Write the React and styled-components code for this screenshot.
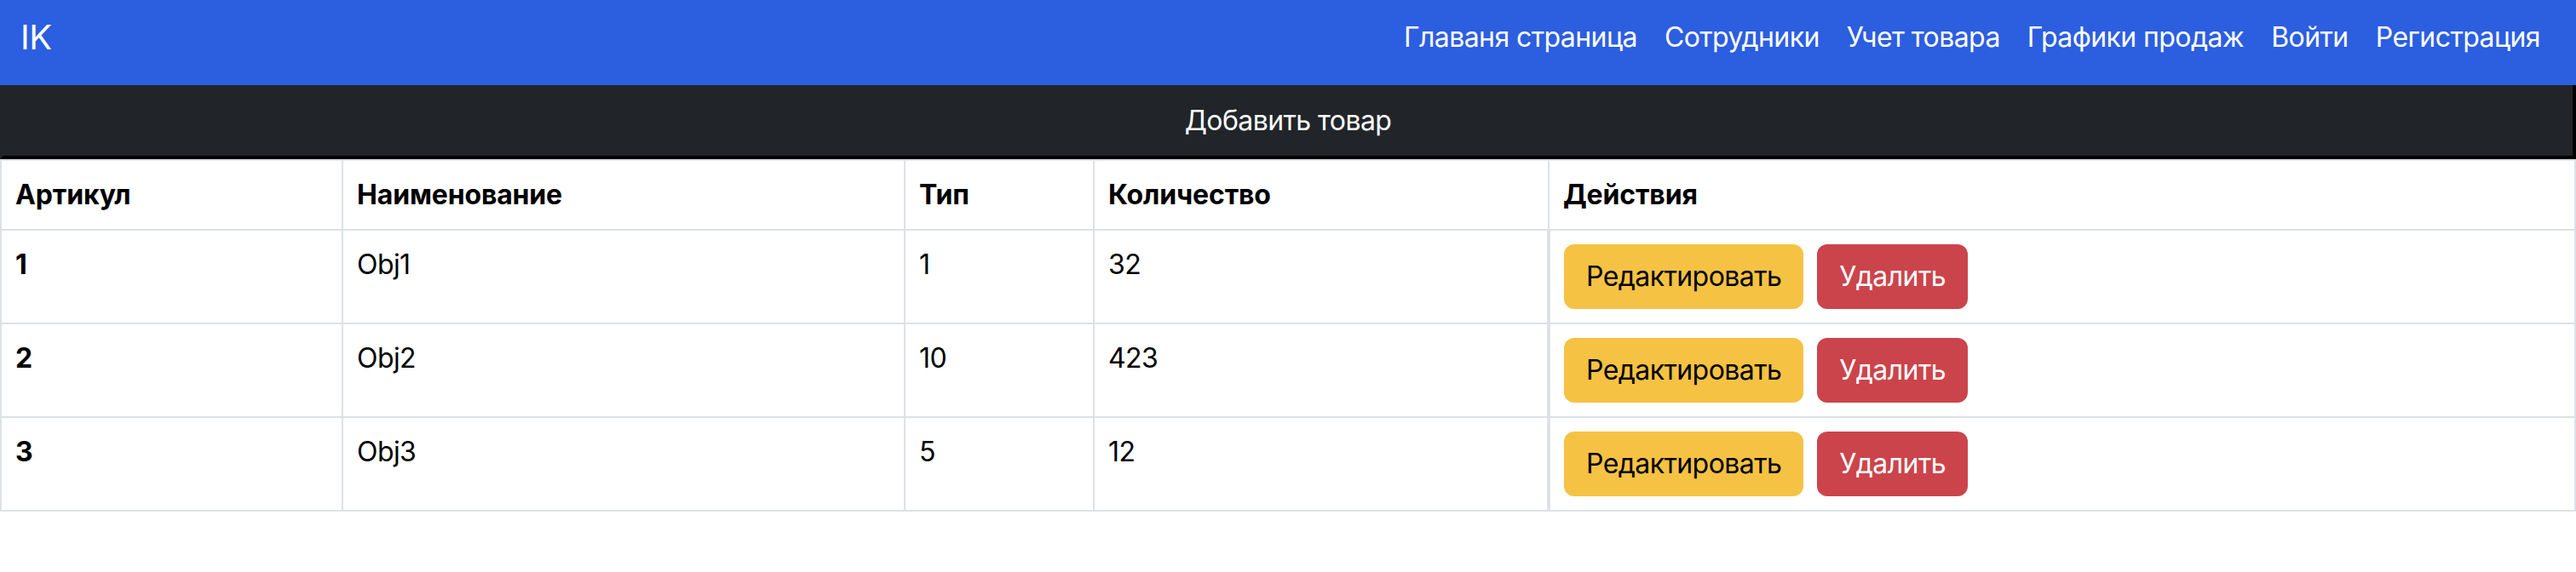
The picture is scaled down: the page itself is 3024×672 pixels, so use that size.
import React from 'react'
import styled, { createGlobalStyle } from 'styled-components'

const GlobalStyle = createGlobalStyle`
  * { box-sizing: border-box; }
  body {
    margin: 0;
    background: #fff;
    color: #000;
    font-family: Inter, "Noto Sans", sans-serif;
    letter-spacing: -0.036em;
  }
  button { letter-spacing: inherit; }
`

const Navbar = styled.nav`
  display: flex;
  align-items: center;
  justify-content: space-between;
  height: 100px;
  padding: 0 26px 12px 24px;
  background: #2c5ee0;
`

const Brand = styled.a`
  font-size: 40px;
  line-height: 60px;
  color: #fff;
  text-decoration: none;
`

const NavList = styled.ul`
  display: flex;
  margin: 0;
  padding: 0;
  list-style: none;
`

const NavLink = styled.a`
  display: block;
  padding: 0 16px;
  font-size: 32px;
  line-height: 48px;
  color: #fff;
  text-decoration: none;
`

const AddButton = styled.button`
  display: block;
  width: 100%;
  height: 87px;
  padding: 0;
  background: #212529;
  color: #fff;
  font-family: inherit;
  font-size: 32px;
  line-height: 48px;
  border-style: solid;
  border-width: 0 4px 4px 4px;
  border-color: #212529 #000 #000 #212529;
`

const Table = styled.table`
  width: 100%;
  table-layout: fixed;
  border-collapse: collapse;
  font-size: 32px;
  line-height: 48px;
  border: 2px solid #dee2e6;
`

const Col = styled.col`
  width: ${p => p.$w || 'auto'};
`

const Cell = styled.td`
  padding: 16px;
  text-align: left;
  vertical-align: top;
  font-weight: ${p => (p.$bold ? 700 : 400)};
  letter-spacing: ${p => (p.$bold ? '-0.005em' : 'inherit')};
  border: 2px solid #dee2e6;
  border-left-width: ${p => (p.$thick ? '4px' : '2px')};
`

const Actions = styled.div`
  display: flex;
  gap: 16px;
`

const Button = styled.button`
  padding: 12px 24px;
  font-family: inherit;
  font-size: 32px;
  line-height: 48px;
  border: 2px solid transparent;
  border-radius: 12px;
  background: ${p => (p.$danger ? '#cb444b' : '#f5c243')};
  color: ${p => (p.$danger ? '#fff' : '#000')};
`

const links = ['Главаня страница', 'Сотрудники', 'Учет товара', 'Графики продаж', 'Войти', 'Регистрация']

const items = [
  { id: 1, name: 'Obj1', type: 1, count: 32 },
  { id: 2, name: 'Obj2', type: 10, count: 423 },
  { id: 3, name: 'Obj3', type: 5, count: 12 },
]

export default function App() {
  return (
    <>
      <GlobalStyle />
      <Navbar>
        <Brand href="#">IK</Brand>
        <NavList>
          {links.map(l => (
            <li key={l}><NavLink href="#">{l}</NavLink></li>
          ))}
        </NavList>
      </Navbar>

      <AddButton>Добавить товар</AddButton>

      <Table>
        <colgroup>
          <Col $w="401px" />
          <Col $w="660px" />
          <Col $w="222px" />
          <Col $w="534px" />
          <Col />
        </colgroup>
        <thead>
          <tr>
            <Cell as="th" $bold>Артикул</Cell>
            <Cell as="th" $bold>Наименование</Cell>
            <Cell as="th" $bold>Тип</Cell>
            <Cell as="th" $bold>Количество</Cell>
            <Cell as="th" $bold>Действия</Cell>
          </tr>
        </thead>
        <tbody>
          {items.map(item => (
            <tr key={item.id}>
              <Cell as="th" $bold>{item.id}</Cell>
              <Cell>{item.name}</Cell>
              <Cell>{item.type}</Cell>
              <Cell>{item.count}</Cell>
              <Cell $thick>
                <Actions>
                  <Button>Редактировать</Button>
                  <Button $danger>Удалить</Button>
                </Actions>
              </Cell>
            </tr>
          ))}
        </tbody>
      </Table>
    </>
  )
}
